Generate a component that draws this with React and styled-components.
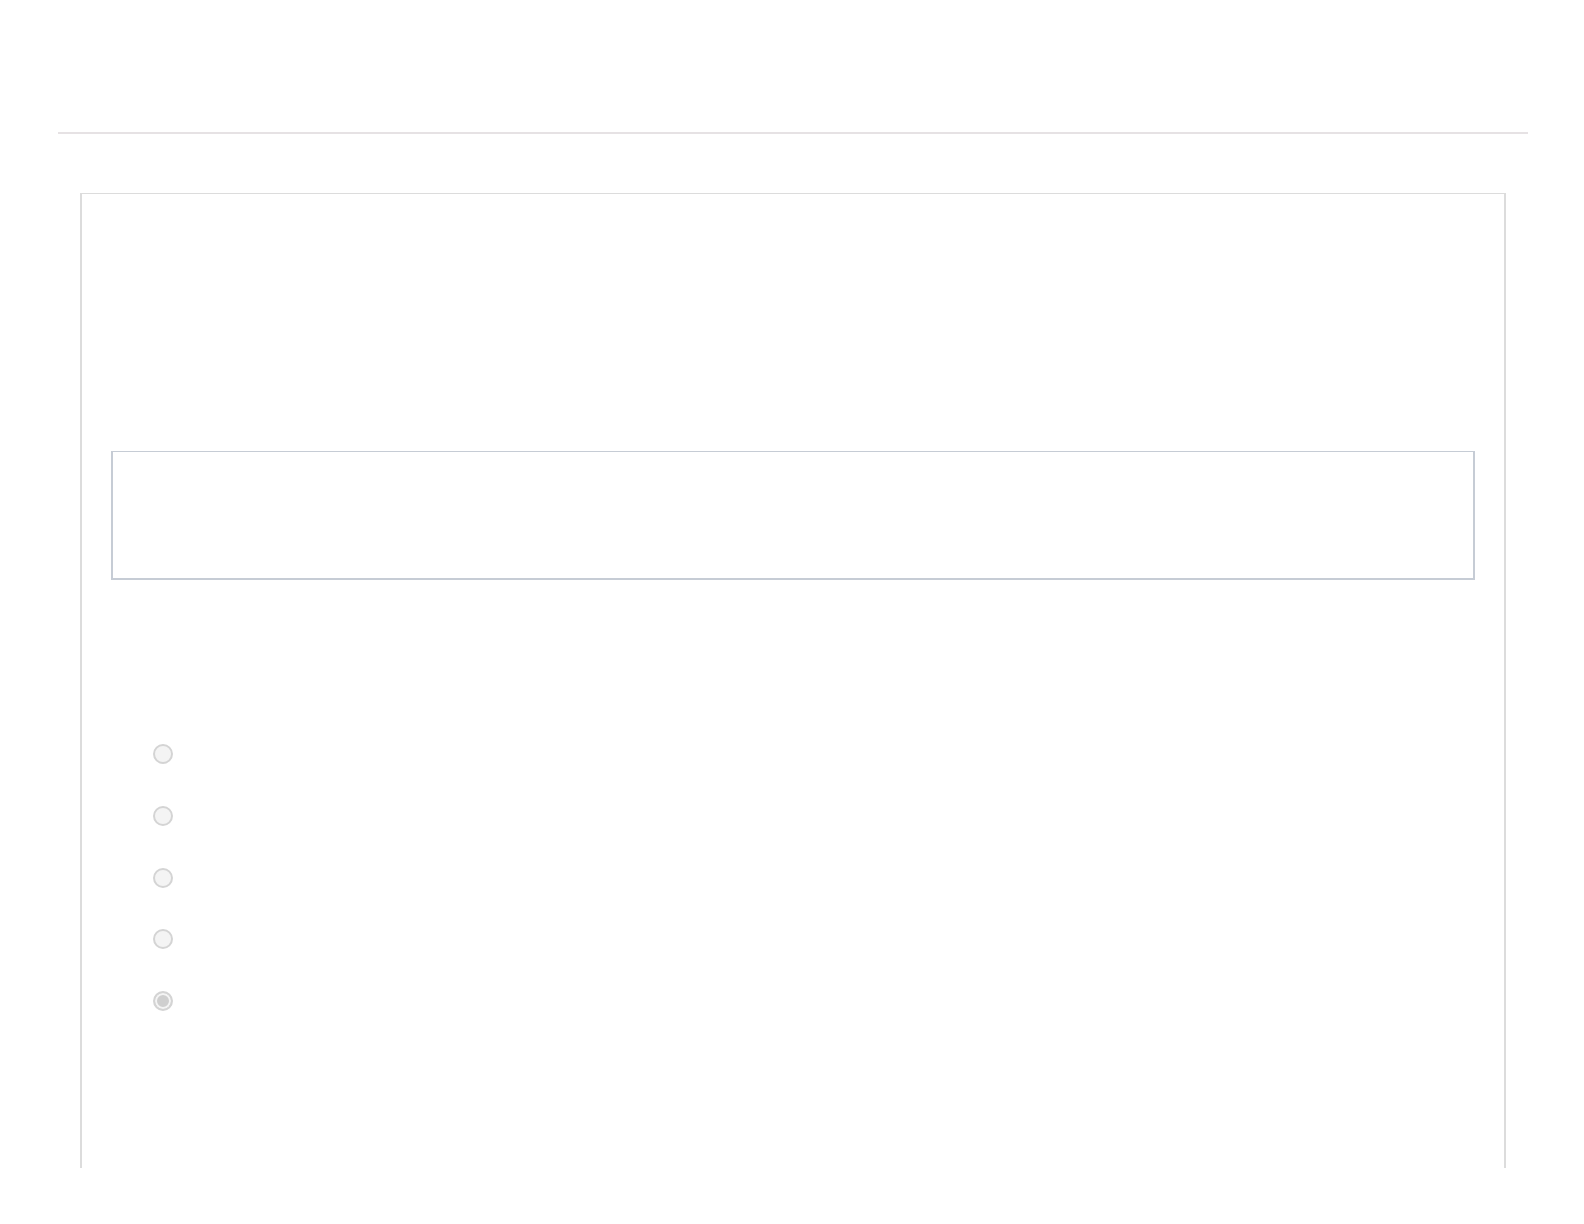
import React from "react";
import styled, { createGlobalStyle } from "styled-components";

const GlobalStyle = createGlobalStyle`
  html, body {
    margin: 0;
    padding: 0;
    background: #ffffff;
    font-family: "Liberation Sans", Arial, sans-serif;
  }
`;

const options = [false, false, false, false, true];

const App = () => (
  <>
    <GlobalStyle />
    <Page>
      <Header />
      <Divider />
      <Card>
        <AnswerBox />
        <OptionList>
          {options.map((checked, i) => (
            <OptionRow key={i}>
              <Radio $checked={checked} />
            </OptionRow>
          ))}
        </OptionList>
      </Card>
    </Page>
  </>
);

const Page = styled.div`
  display: flex;
  flex-direction: column;
  padding: 0 56px 0 58px;
  height: 1224px;
  box-sizing: border-box;
`;

const Header = styled.header`
  height: 132px;
  flex-shrink: 0;
`;

const Divider = styled.div`
  height: 2px;
  background: #e6e2e4;
  flex-shrink: 0;
`;

const Card = styled.section`
  margin: 59px 22px 0 22px;
  height: 975px;
  box-sizing: border-box;
  border-style: solid;
  border-color: #dcdcdc;
  border-width: 1px 2px 0 2px;
  padding: 257px 29px 0 29px;
  display: flex;
  flex-direction: column;
`;

const AnswerBox = styled.div`
  height: 129px;
  box-sizing: border-box;
  border-style: solid;
  border-color: #c6ccd5;
  border-width: 1px 2px 2px 2px;
  background: #ffffff;
`;

const OptionList = styled.div`
  display: flex;
  flex-direction: column;
  gap: 41.8px;
  margin-top: 164px;
  padding-left: 42px;
`;

const OptionRow = styled.div`
  display: flex;
  align-items: center;
  height: 20px;
`;

const Radio = styled.span`
  width: 20px;
  height: 20px;
  box-sizing: border-box;
  border-radius: 50%;
  border: 2px solid #d4d4d4;
  background: ${(p) => (p.$checked ? "#cfcfcf" : "#f4f4f4")};
  box-shadow: ${(p) => (p.$checked ? "inset 0 0 0 2px #f4f4f4" : "none")};
`;

export default App;
